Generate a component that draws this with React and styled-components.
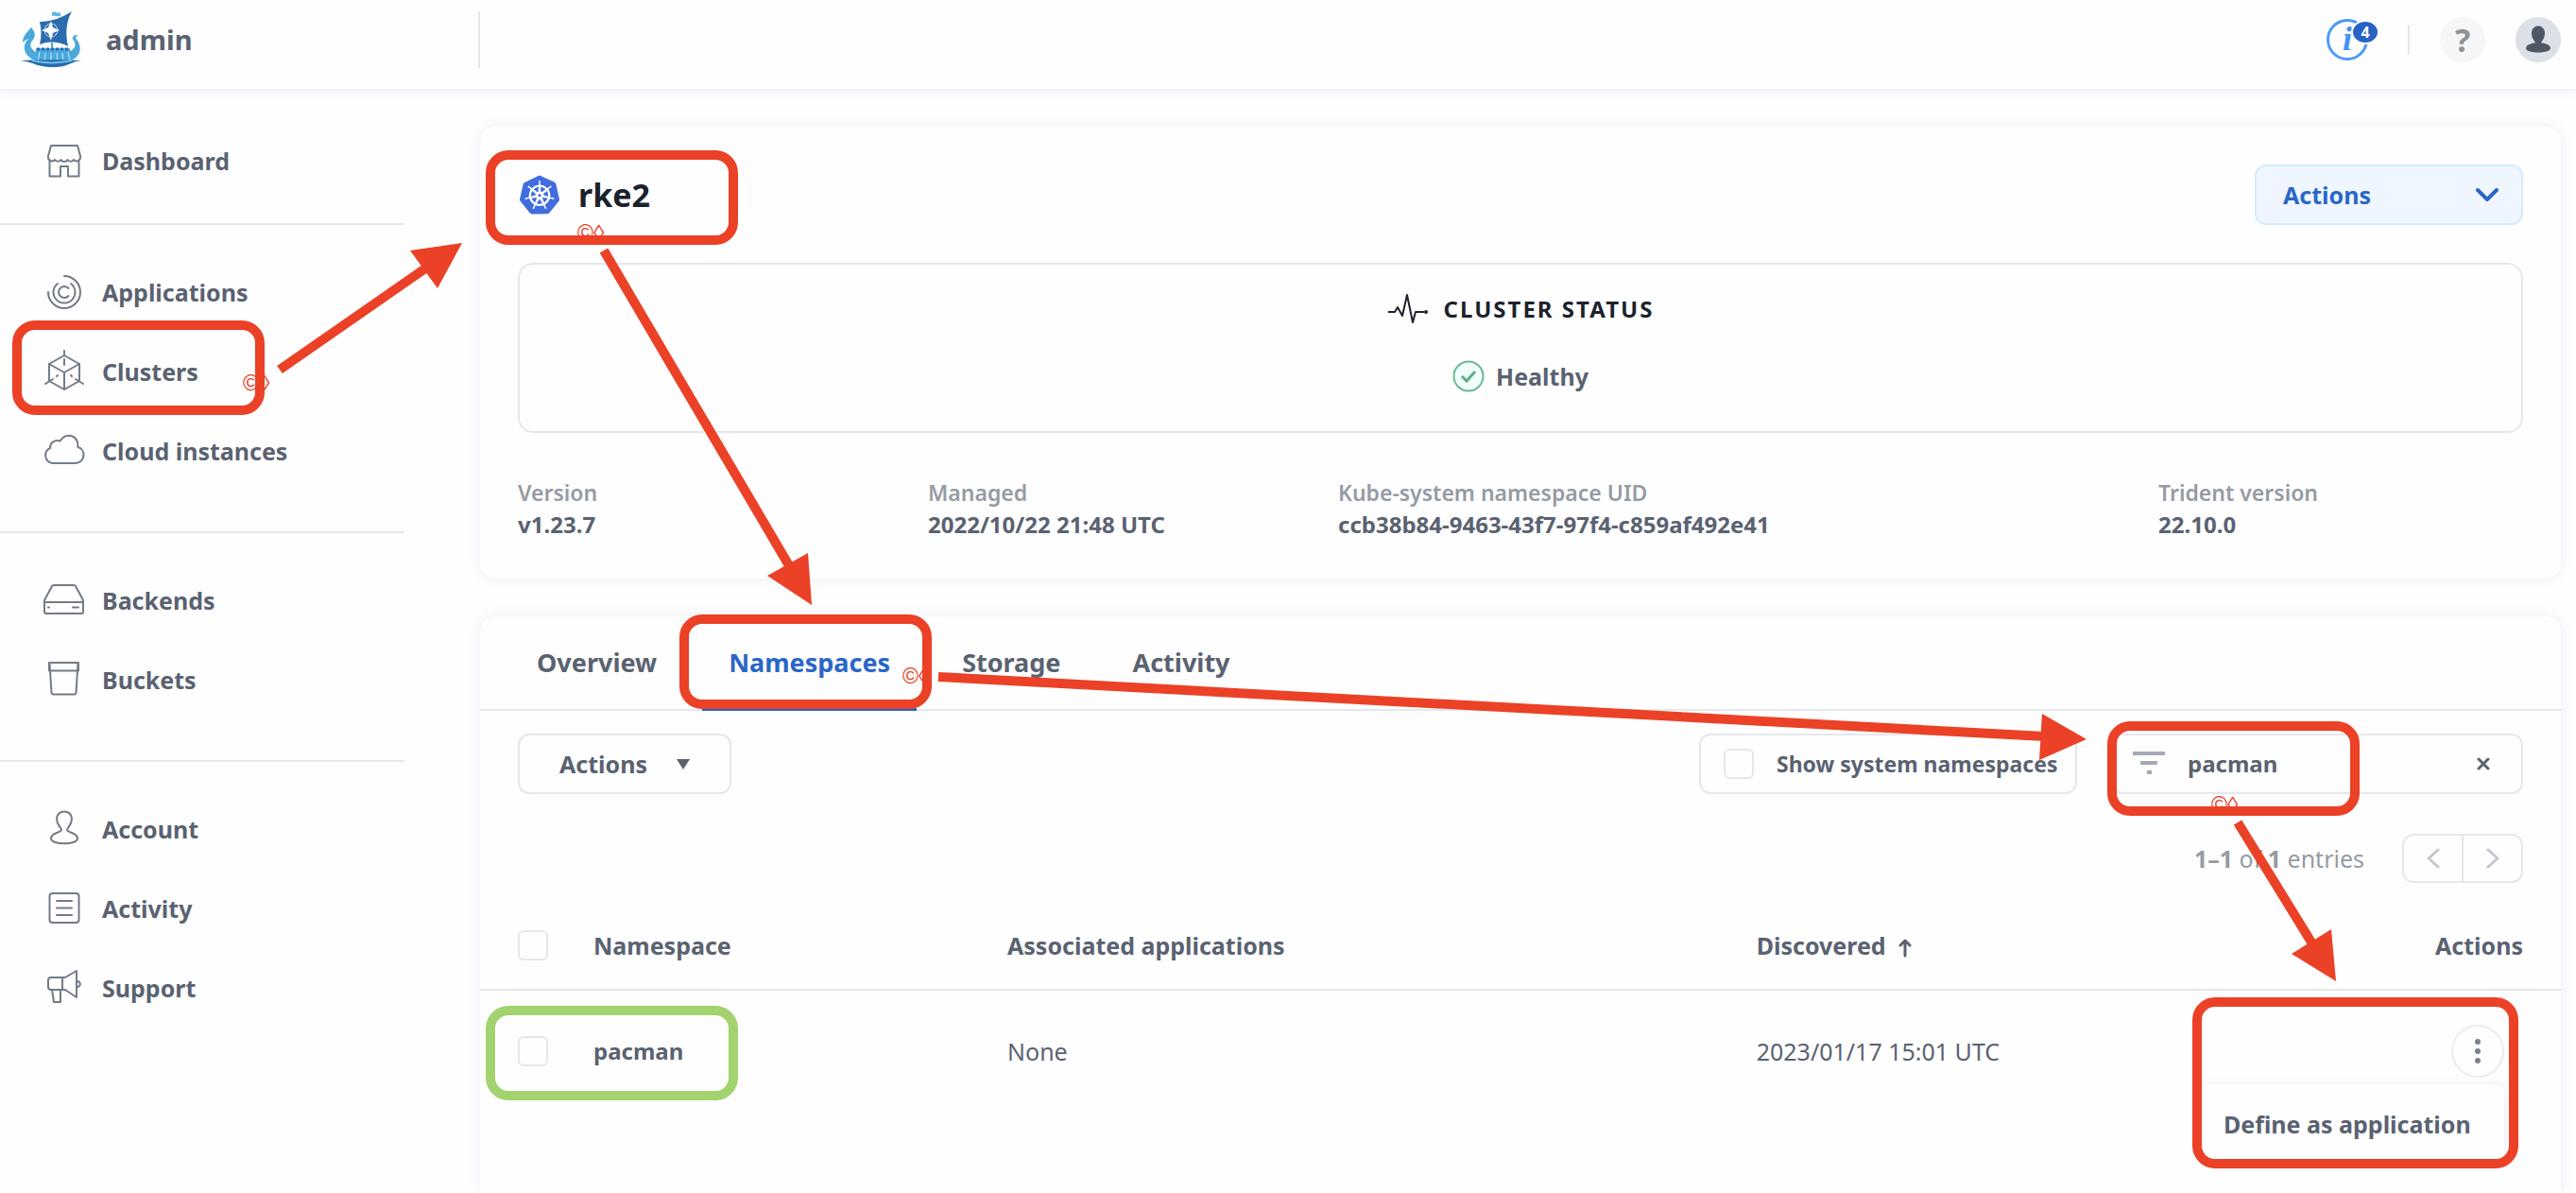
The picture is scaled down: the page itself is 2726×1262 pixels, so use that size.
import React from "react";
import styled, { createGlobalStyle, css } from "styled-components";
import { SiKubernetes } from "react-icons/si";

const color = {
  ink: "#1b222c",
  text: "#5a6271",
  muted: "#959ba4",
  faint: "#c3c7cd",
  line: "#e4e8ec",
  blue: "#2a66c8",
  mark: "#eb4126",
  ok: "#a2d36e",
};

const Global = createGlobalStyle`
  * { box-sizing: border-box; }
  body {
    margin: 0;
    background: #fefefe;
    color: ${color.text};
    font-family: "Noto Sans", "Open Sans", sans-serif;
    font-size: 25px;
    font-weight: 700;
    line-height: 34px;
  }
  button, input { font: inherit; color: inherit; }
  button { cursor: pointer; }
`;

const Page = styled.div`
  position: relative;
  display: flex;
  flex-direction: column;
  min-height: 100vh;
  overflow: hidden;
`;

const Header = styled.header`
  display: flex;
  align-items: center;
  padding: 12px 16px 22px 0;
  border-bottom: 2px solid #f1f2f8;
  box-shadow: 0 4px 10px #f6f5fc;
`;

const Brand = styled.div`
  display: flex;
  align-items: center;
  gap: 24px;
  width: 508px;
  height: 60px;
  padding-left: 22px;
  border-right: 2px solid ${color.line};
  font-size: 29px;
`;

const HeaderTools = styled.div`
  display: flex;
  align-items: center;
  gap: 32px;
  margin-left: auto;
`;

const InfoButton = styled.button`
  position: relative;
  width: 54px;
  height: 48px;
  padding: 0;
  border: 0;
  background: none;
  text-align: left;
`;

const InfoRing = styled.span`
  display: block;
  width: 44px;
  height: 44px;
  border: 3px solid #4c9af8;
  border-radius: 50%;
  color: #4391f5;
  font: italic 700 36px/36px "Liberation Serif", serif;
  text-align: center;
`;

const Count = styled.span`
  position: absolute;
  top: 3px;
  right: -2px;
  width: 30px;
  height: 26px;
  border: 2px solid #fefefe;
  border-radius: 50%;
  background: #2863c4;
  color: #fff;
  font-size: 16px;
  line-height: 22px;
  text-align: center;
`;

const ToolDivider = styled.span`
  width: 2px;
  height: 32px;
  background: ${color.line};
`;

const RoundButton = styled.button`
  display: grid;
  place-items: center;
  width: 48px;
  height: 48px;
  padding: 0;
  border: 0;
  border-radius: 50%;
  background: ${(p) => p.$tone};
  color: #8d9299;
  font-size: 34px;
`;

const Body = styled.div`
  display: flex;
  flex: 1;
`;

const Sidebar = styled.nav`
  flex: 0 0 508px;
`;

const NavGroup = styled.ul`
  width: 428px;
  margin: 0;
  padding: ${(p) => (p.$lead ? "32px 0 24px" : "29px 0 43px")};
  list-style: none;
  & + & { border-top: 2px solid ${color.line}; }
`;

const NavLink = styled.a`
  display: flex;
  align-items: center;
  gap: 16px;
  height: 84px;
  padding-left: 44px;
  color: ${color.text};
  text-decoration: none;
`;

const LineIcon = styled.svg`
  flex: none;
  width: 48px;
  height: 48px;
  fill: none;
  stroke: #737b87;
  stroke-width: 2;
  stroke-linecap: round;
  stroke-linejoin: round;
`;

const Main = styled.main`
  display: flex;
  flex: 1;
  flex-direction: column;
  gap: 40px;
  min-width: 0;
  padding: 38px 16px 0 0;
`;

const Card = styled.section`
  flex: ${(p) => (p.$fill ? "1 0 auto" : "none")};
  padding: ${(p) => (p.$fill ? "0" : "40px")};
  border-radius: ${(p) => (p.$fill ? "16px 16px 0 0" : "16px")};
  background: #fefefe;
  box-shadow: 0 0 16px #eeeff8;
`;

const TitleRow = styled.div`
  display: flex;
  align-items: center;
  justify-content: space-between;
  height: 64px;
`;

const Title = styled.h1`
  display: flex;
  align-items: center;
  gap: 20px;
  margin: 0;
  padding-left: 2px;
  color: ${color.ink};
  font-size: 34px;
  font-weight: 700;
  svg { width: 42px; height: 42px; color: #416ddf; }
`;

const PrimaryButton = styled.button`
  display: flex;
  align-items: center;
  justify-content: space-between;
  width: 284px;
  height: 64px;
  padding: 0 24px 0 28px;
  border: 2px solid #d4ebfd;
  border-radius: 12px;
  background: #eff6ff;
  color: ${color.blue};
`;

const StatusBox = styled.section`
  display: flex;
  flex-direction: column;
  align-items: center;
  gap: 37px;
  height: 180px;
  margin-top: 40px;
  padding-top: 30px;
  border: 2px solid ${color.line};
  border-radius: 16px;
`;

const StatusTitle = styled.h2`
  display: flex;
  align-items: center;
  gap: 16px;
  margin: 0;
  color: ${color.ink};
  font-size: 24px;
  font-weight: 700;
  letter-spacing: 2px;
`;

const StatusValue = styled.div`
  display: flex;
  align-items: center;
  gap: 12px;
`;

const Facts = styled.dl`
  display: grid;
  grid-template-columns: repeat(5, minmax(0, 1fr));
  gap: 48px;
  margin: 46px 0 0;
`;

const Fact = styled.div`
  grid-column: span ${(p) => p.$span || 1};
  dt { color: ${color.muted}; font-size: 23px; font-weight: 600; }
  dd { margin: 0; font-size: 24px; white-space: nowrap; }
`;

const Tabs = styled.div`
  display: flex;
  gap: 20px;
  height: 100px;
  padding-left: 32px;
  border-bottom: 2px solid ${color.line};
`;

const Tab = styled.button`
  height: 100px;
  padding: 0 28px;
  border: 0;
  border-bottom: 3px solid ${(p) => (p.$active ? color.blue : "transparent")};
  background: none;
  color: ${(p) => (p.$active ? color.blue : color.text)};
  font-size: 27px;
`;

const Toolbar = styled.div`
  display: flex;
  align-items: center;
  padding: 24px 40px 0;
`;

const field = css`
  display: flex;
  align-items: center;
  height: 64px;
  border: 2px solid ${color.line};
  border-radius: 12px;
  background: #fefefe;
`;

const MenuButton = styled.button`
  ${field}
  gap: 31px;
  padding: 0 42px;
`;

const ToggleField = styled.label`
  ${field}
  gap: 24px;
  width: 400px;
  margin: 0 36px 0 auto;
  padding-left: 24px;
  font-size: 23px;
  white-space: nowrap;
`;

const FilterField = styled.label`
  ${field}
  width: 436px;
  padding: 0 24px 0 21px;
  font-size: 24px;
`;

const FilterInput = styled.input`
  flex: 1;
  min-width: 0;
  margin-left: 24px;
  padding: 0;
  border: 0;
  outline: 0;
  background: none;
`;

const ClearButton = styled.button`
  display: grid;
  place-items: center;
  width: 32px;
  height: 32px;
  padding: 0;
  border: 0;
  background: none;
`;

const Check = styled.input.attrs({ type: "checkbox" })`
  display: block;
  appearance: none;
  width: 32px;
  height: 32px;
  margin: 0;
  border: 2px solid ${color.line};
  border-radius: 6px;
  background: #fefefe;
`;

const Pager = styled.div`
  display: flex;
  align-items: center;
  justify-content: flex-end;
  gap: 40px;
  margin-top: 42px;
  padding: 0 40px;
  color: ${color.muted};
  font-size: 25px;
  font-weight: 400;
  b { font-weight: 700; }
`;

const PagerButtons = styled.div`
  display: flex;
  border: 2px solid ${color.line};
  border-radius: 12px;
`;

const PagerButton = styled.button`
  display: grid;
  place-items: center;
  width: 61px;
  height: 48px;
  padding: 0;
  border: 0;
  background: none;
  & + & { width: 63px; border-left: 2px solid ${color.line}; }
`;

const Table = styled.table`
  width: 100%;
  table-layout: fixed;
  border-collapse: collapse;
  th, td { padding: 0; text-align: left; }
  th { height: 113px; padding-top: 19px; border-bottom: 2px solid ${color.line}; font-weight: 700; }
  th svg { margin-left: 6px; vertical-align: middle; }
  td { height: 128px; font-weight: 400; }
  th:first-child, td:first-child { padding-left: 40px; }
  th:last-child { padding-right: 40px; text-align: right; }
  td:last-child { padding-right: 60px; }
`;

const Name = styled.span`
  font-size: 24px;
  font-weight: 700;
`;

const RowMenu = styled.div`
  position: relative;
  width: 56px;
  margin-left: auto;
`;

const Kebab = styled.button`
  display: grid;
  place-items: center;
  width: 56px;
  height: 56px;
  padding: 0;
  border: 2px solid #ebecf2;
  border-radius: 50%;
  background: #fefefe;
`;

const Popup = styled.div`
  position: absolute;
  top: 63px;
  right: 0;
  border-radius: 8px;
  background: #fefefe;
  box-shadow: 0 0 8px #e9eaf3;
`;

const PopupItem = styled.button`
  width: 320px;
  height: 84px;
  padding: 0 23px;
  border: 0;
  background: none;
  font-weight: 700;
  text-align: left;
  white-space: nowrap;
`;

const Marks = styled.div`
  position: absolute;
  inset: 0;
  overflow: hidden;
  pointer-events: none;
`;

const Frame = styled.div`
  position: absolute;
  left: ${(p) => p.$x}px;
  top: ${(p) => p.$y}px;
  width: ${(p) => p.$w || 267}px;
  height: ${(p) => p.$h || 100}px;
  border: 10px solid ${(p) => p.$tone || color.mark};
  border-radius: 24px;
`;

const Glyphs = styled.span`
  position: absolute;
  left: ${(p) => p.$x}px;
  top: ${(p) => p.$y}px;
  color: ${color.mark};
  font: 400 23px/26px "Liberation Sans", sans-serif;
`;

const Arrows = styled.svg`
  position: absolute;
  left: 0;
  top: 0;
  stroke: ${color.mark};
  stroke-width: 10;
  fill: ${color.mark};
  path { stroke: none; }
`;

const icons = {
  dashboard: (
    <>
      <path d="M10 8h28l3 11v2a4 4 0 0 1-7 2 4 4 0 0 1-6.500 0 4 4 0 0 1-7 0 4 4 0 0 1-6.500 0 4 4 0 0 1-7-2v-2z" />
      <path d="M8.500 25v15.500H20V30h8v10.500h11.500V25" />
    </>
  ),
  applications: (
    <>
      <path d="M24 7a17 17 0 1 1-17 17" />
      <path d="M31 15a11.500 11.500 0 1 1-14 0" />
      <path d="M28.500 28a6 6 0 1 1 0-8" />
    </>
  ),
  clusters: (
    <>
      <path d="M24 7l16 9v18l-16 9-16-9V16z" />
      <path d="M8 16l16 9 16-9M24 25v18" />
      <path d="M24 2v5M4 37l8-5M44 37l-8-5" />
      <path d="M24 11v6M17 28l-1 1M31 28l1 1" />
    </>
  ),
  cloud: <path d="M11 37a8.500 8.500 0 0 1-2-16C9 15 14 12 19.500 13.500 27 3 39 8 38.500 20c8 2 8.500 15-2 17z" />,
  backends: (
    <>
      <path d="M3 24L11 9a3 3 0 0 1 2-1h21a3 3 0 0 1 2 1l8 15v12a2 2 0 0 1-2 2H5a2 2 0 0 1-2-2z" />
      <path d="M3 26h41M7 31.500h1M33 31.500h6" />
    </>
  ),
  buckets: (
    <>
      <path d="M8.500 6h30l-2 32a2 2 0 0 1-2 1.500h-22a2 2 0 0 1-2-1.500z" />
      <path d="M8 6v8.500h31V6" />
    </>
  ),
  account: (
    <path d="M21 25c0-3-5-5-5-12 0-10 16-10 16 0 0 7-5 9-5 12s11 2 11 9c0 7-28 7-28 0 0-7 11-6 11-9z" />
  ),
  activity: (
    <>
      <rect x="8.500" y="8" width="31" height="31" rx="3" />
      <path d="M16 16h16M16 23.500h16M16 31h16" />
    </>
  ),
  support: (
    <>
      <path d="M10 13h15L37 6v28l-12-8H10a3 3 0 0 1-3-3v-7a3 3 0 0 1 3-3zM22 13v13" />
      <path d="M11 26l2 13h7V26M37 17c5 0 5 6 0 6" />
    </>
  ),
};

const navigation = [
  [["dashboard", "Dashboard"]],
  [["applications", "Applications"], ["clusters", "Clusters"], ["cloud", "Cloud instances"]],
  [["backends", "Backends"], ["buckets", "Buckets"]],
  [["account", "Account"], ["activity", "Activity"], ["support", "Support"]],
];

const facts = [
  { label: "Version", value: "v1.23.7" },
  { label: "Managed", value: "2022/10/22 21:48 UTC" },
  { label: "Kube-system namespace UID", value: "ccb38b84-9463-43f7-97f4-c859af492e41", span: 2 },
  { label: "Trident version", value: "22.10.0" },
];

const arrows = [
  { from: [296, 391], to: [450, 284], head: "M489 257L434 265L463 305z" },
  { from: [639, 265], to: [836, 600], head: "M859 640L855 585L812 609z" },
  { from: [993, 716], to: [2164, 779], head: "M2208 782L2161 755L2158 804z" },
  { from: [2368, 870], to: [2448, 1000], head: "M2472 1038L2467 983L2425 1009z" },
];

function ShipLogo() {
  return (
    <svg width="66" height="62" viewBox="0 0 66 62" aria-hidden="true">
      <path d="M33 2c3-2 5 2 9 0v4c-4 1-6-1-9 0z" fill="#5ab8e4" />
      <path d="M20 12c12 0 23-4 34-11-6 10-7 24-4 37-9-5-20-6-30-2 2-8 2-16 0-24z" fill="#2a6cae" />
      <path d="M32 11l2 7 7 3-7 3-2 8-3-8-7-3 7-3z" fill="#fff" />
      <circle cx="32" cy="21" r="7" fill="none" stroke="#cfe2f3" strokeWidth="1" />
      <path d="M33 34v10" stroke="#4aa9dc" strokeWidth="2" />
      <path d="M11 18c4 4 5 9 2 13-4 4-4 9 3 13 11 3 25 3 34 0 8-3 9-8 6-12-3-3 1-8 5-5-4 0-3 3-1 5 5 8 3 16-5 20-12 5-30 6-42 0C1 46 2 34 9 30c-3 1-6 2-7 4 0-7 4-10 9-16z" fill="#4aa9dc" />
      <path d="M16 40h36v12H16z" fill="#4aa9dc" />
      <path d="M17 41h34" stroke="#2a6cae" strokeWidth="3" strokeDasharray="3 2" />
      <path d="M20 44l-2 10M26 45l-1 10M32 45v11M38 45l1 10M44 45l1 10M50 44l2 9" stroke="#cdeaf8" strokeWidth="1" />
      <path d="M0 53c14-1 50-1 64 0-9 1-11 4-19 6-9 2-20 1-27-1-6-2-10-4-18-5z" fill="#2a6cae" />
      <path d="M12 53c13 3 29 3 42 0" stroke="#67bfe8" strokeWidth="2" fill="none" />
    </svg>
  );
}

function Chevron({ d, width, height, stroke = "currentColor", weight = 3 }) {
  return (
    <svg width={width} height={height} viewBox={`0 0 ${width} ${height}`} fill="none" stroke={stroke} strokeWidth={weight} strokeLinecap="round" strokeLinejoin="round" aria-hidden="true">
      <path d={d} />
    </svg>
  );
}

export default function App() {
  return (
    <>
      <Global />
      <Page>
        <Header>
          <Brand>
            <ShipLogo />
            admin
          </Brand>
          <HeaderTools>
            <InfoButton aria-label="4 notifications">
              <InfoRing>i</InfoRing>
              <Count>4</Count>
            </InfoButton>
            <ToolDivider />
            <RoundButton $tone="#f6f6f6" aria-label="Help">?</RoundButton>
            <RoundButton $tone="#dde0e6" aria-label="Profile">
              <svg width="28" height="30" viewBox="0 0 28 30" fill="#4e5865" aria-hidden="true">
                <path d="M11 18c-1-2-4-4-4-10 0-10 14-10 14 0 0 6-3 8-4 10 3 1 10 2 10 6 0 6-26 6-26 0 0-4 7-5 10-6z" />
              </svg>
            </RoundButton>
          </HeaderTools>
        </Header>

        <Body>
          <Sidebar aria-label="Main">
            {navigation.map((group, index) => (
              <NavGroup key={group[0][0]} $lead={index === 0}>
                {group.map(([icon, label]) => (
                  <li key={icon}>
                    <NavLink href={`#${icon}`}>
                      <LineIcon viewBox="0 0 48 48" aria-hidden="true">{icons[icon]}</LineIcon>
                      {label}
                    </NavLink>
                  </li>
                ))}
              </NavGroup>
            ))}
          </Sidebar>

          <Main>
            <Card>
              <TitleRow>
                <Title>
                  <SiKubernetes aria-hidden="true" />
                  rke2
                </Title>
                <PrimaryButton>
                  Actions
                  <Chevron width={24} height={16} weight={4} d="M2 3l10 10L22 3" />
                </PrimaryButton>
              </TitleRow>

              <StatusBox>
                <StatusTitle>
                  <svg width="44" height="34" viewBox="0 0 44 34" fill="none" stroke={color.ink} strokeWidth="2" strokeLinejoin="round" aria-hidden="true">
                    <path d="M1 20h7l3-5 5 9 5-22 6 29 3-11h9" />
                    <circle cx="41" cy="20" r="2" fill={color.ink} stroke="none" />
                  </svg>
                  CLUSTER STATUS
                </StatusTitle>
                <StatusValue>
                  <svg width="34" height="34" viewBox="0 0 34 34" fill="none" stroke="#6cb894" aria-hidden="true">
                    <circle cx="17" cy="17" r="15.500" fill="#f0fffc" strokeWidth="2" />
                    <path d="M10 17l5 5 9-10" stroke="#5fae88" strokeWidth="3" />
                  </svg>
                  Healthy
                </StatusValue>
              </StatusBox>

              <Facts>
                {facts.map((fact) => (
                  <Fact key={fact.label} $span={fact.span}>
                    <dt>{fact.label}</dt>
                    <dd>{fact.value}</dd>
                  </Fact>
                ))}
              </Facts>
            </Card>

            <Card $fill>
              <Tabs role="tablist">
                {["Overview", "Namespaces", "Storage", "Activity"].map((name) => (
                  <Tab key={name} role="tab" aria-selected={name === "Namespaces"} $active={name === "Namespaces"}>
                    {name}
                  </Tab>
                ))}
              </Tabs>

              <Toolbar>
                <MenuButton>
                  Actions
                  <svg width="14" height="11" viewBox="0 0 14 11" fill={color.text} aria-hidden="true">
                    <path d="M0 0h14L7 11z" />
                  </svg>
                </MenuButton>
                <ToggleField>
                  <Check />
                  Show system namespaces
                </ToggleField>
                <FilterField>
                  <svg width="34" height="26" viewBox="0 0 34 26" stroke="#a3a9b5" strokeWidth="4" aria-hidden="true">
                    <path d="M0 2h34M8 12h18M15 22h5" />
                  </svg>
                  <FilterInput aria-label="Filter" defaultValue="pacman" />
                  <ClearButton aria-label="Clear filter">
                    <Chevron width={14} height={14} d="M2 2l10 10M12 2L2 12" />
                  </ClearButton>
                </FilterField>
              </Toolbar>

              <Pager>
                <span><b>1–1</b> of <b>1</b> entries</span>
                <PagerButtons>
                  <PagerButton aria-label="Previous page">
                    <Chevron width={14} height={22} stroke={color.faint} d="M12 2L2 11l10 9" />
                  </PagerButton>
                  <PagerButton aria-label="Next page">
                    <Chevron width={14} height={22} stroke={color.faint} d="M2 2l10 9-10 9" />
                  </PagerButton>
                </PagerButtons>
              </Pager>

              <Table>
                <colgroup>
                  <col width="120" />
                  <col width="438" />
                  <col width="36%" />
                  <col />
                  <col width="200" />
                </colgroup>
                <thead>
                  <tr>
                    <th><Check aria-label="Select all" /></th>
                    <th>Namespace</th>
                    <th>Associated applications</th>
                    <th>
                      Discovered{" "}
                      <Chevron width={16} height={20} d="M8 18V2M3 7l5-5 5 5" />
                    </th>
                    <th>Actions</th>
                  </tr>
                </thead>
                <tbody>
                  <tr>
                    <td><Check aria-label="Select pacman" /></td>
                    <td><Name>pacman</Name></td>
                    <td>None</td>
                    <td>2023/01/17 15:01 UTC</td>
                    <td>
                      <RowMenu>
                        <Kebab aria-label="Row actions">
                          <svg width="6" height="28" viewBox="0 0 6 28" fill="#7b828d" aria-hidden="true">
                            <circle cx="3" cy="4" r="3" />
                            <circle cx="3" cy="14" r="3" />
                            <circle cx="3" cy="24" r="3" />
                          </svg>
                        </Kebab>
                        <Popup>
                          <PopupItem>Define as application</PopupItem>
                        </Popup>
                      </RowMenu>
                    </td>
                  </tr>
                </tbody>
              </Table>
            </Card>
          </Main>
        </Body>

        <Marks>
          <Glyphs $x={257} $y={392}>©◊</Glyphs>
          <Glyphs $x={611} $y={233}>©◊</Glyphs>
          <Glyphs $x={955} $y={702}>©◊</Glyphs>
          <Glyphs $x={2340} $y={838}>©◊</Glyphs>
          <Frame $x={13} $y={339} />
          <Frame $x={514} $y={159} />
          <Frame $x={719} $y={650} />
          <Frame $x={2230} $y={763} />
          <Frame $x={2320} $y={1055} $w={345} $h={181} />
          <Frame $x={514} $y={1064} $tone={color.ok} />
          <Arrows width="2726" height="1262" viewBox="0 0 2726 1262" aria-hidden="true">
            {arrows.map(({ from, to, head }) => (
              <g key={head}>
                <line x1={from[0]} y1={from[1]} x2={to[0]} y2={to[1]} />
                <path d={head} />
              </g>
            ))}
          </Arrows>
        </Marks>
      </Page>
    </>
  );
}
